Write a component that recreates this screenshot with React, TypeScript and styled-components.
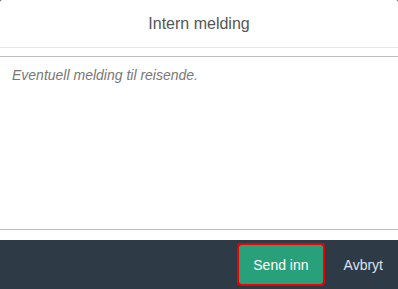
import { FC } from 'react'
import styled, { createGlobalStyle } from 'styled-components'

const GlobalStyle = createGlobalStyle`
  html, body {
    margin: 0;
    padding: 0;
    background: #3a3f45;
  }
  body {
    font-family: 'Liberation Sans', Arial, sans-serif;
  }
`

const App: FC = () => (
  <>
    <GlobalStyle />
    <StyleDivModal>
      <StyleHeader>
        <StyleH4Title>{'Intern melding'}</StyleH4Title>
      </StyleHeader>
      <StyleDivBody>
        <StyleTextarea placeholder={'Eventuell melding til reisende.'} />
      </StyleDivBody>
      <StyleFooter>
        <StyleButtonSubmit type={'button'}>{'Send inn'}</StyleButtonSubmit>
        <StyleButtonCancel type={'button'}>{'Avbryt'}</StyleButtonCancel>
      </StyleFooter>
    </StyleDivModal>
  </>
)

export default App

const StyleDivModal = styled.div`
  display: flex;
  flex-direction: column;
  width: 398px;
  height: 289px;
  background: #fff;
  border-radius: 2px 2px 0 0;
  overflow: hidden;
`

const StyleHeader = styled.header`
  display: flex;
  justify-content: center;
  align-items: center;
  height: 47px;
  border-bottom: 1px solid #e8e8e8;
`

const StyleH4Title = styled.h4`
  margin: 0;
  font-size: 16px;
  font-weight: 400;
  color: #555;
`

const StyleDivBody = styled.div`
  display: flex;
  flex: 1;
  padding: 8px 0 10px;
`

const StyleTextarea = styled.textarea`
  flex: 1;
  margin: 0;
  padding: 10px 12px;
  border: none;
  border-top: 1px solid #bdbdbd;
  border-bottom: 1px solid #bdbdbd;
  font-family: 'Liberation Sans', Arial, sans-serif;
  font-size: 14px;
  resize: none;
  outline: none;
  color: #333;

  &::placeholder {
    color: #777;
    font-style: italic;
  }
`

const StyleFooter = styled.footer`
  display: flex;
  justify-content: flex-end;
  align-items: center;
  gap: 8px;
  height: 49px;
  padding: 0 2px 0 0;
  background: #2f3a47;
  box-sizing: border-box;
`

const StyleButtonSubmit = styled.button`
  height: 39px;
  padding: 0 14px;
  border: none;
  border-radius: 2px;
  outline: 2px solid #f00000;
  background: #28a07a;
  color: #fff;
  font-family: 'Liberation Sans', Arial, sans-serif;
  font-size: 14px;
  box-shadow: 0 1px 3px rgba(0, 0, 0, 0.4);
`

const StyleButtonCancel = styled.button`
  height: 39px;
  padding: 0 13px;
  border: none;
  background: transparent;
  color: #dde5ef;
  font-family: 'Liberation Sans', Arial, sans-serif;
  font-size: 14px;
`
